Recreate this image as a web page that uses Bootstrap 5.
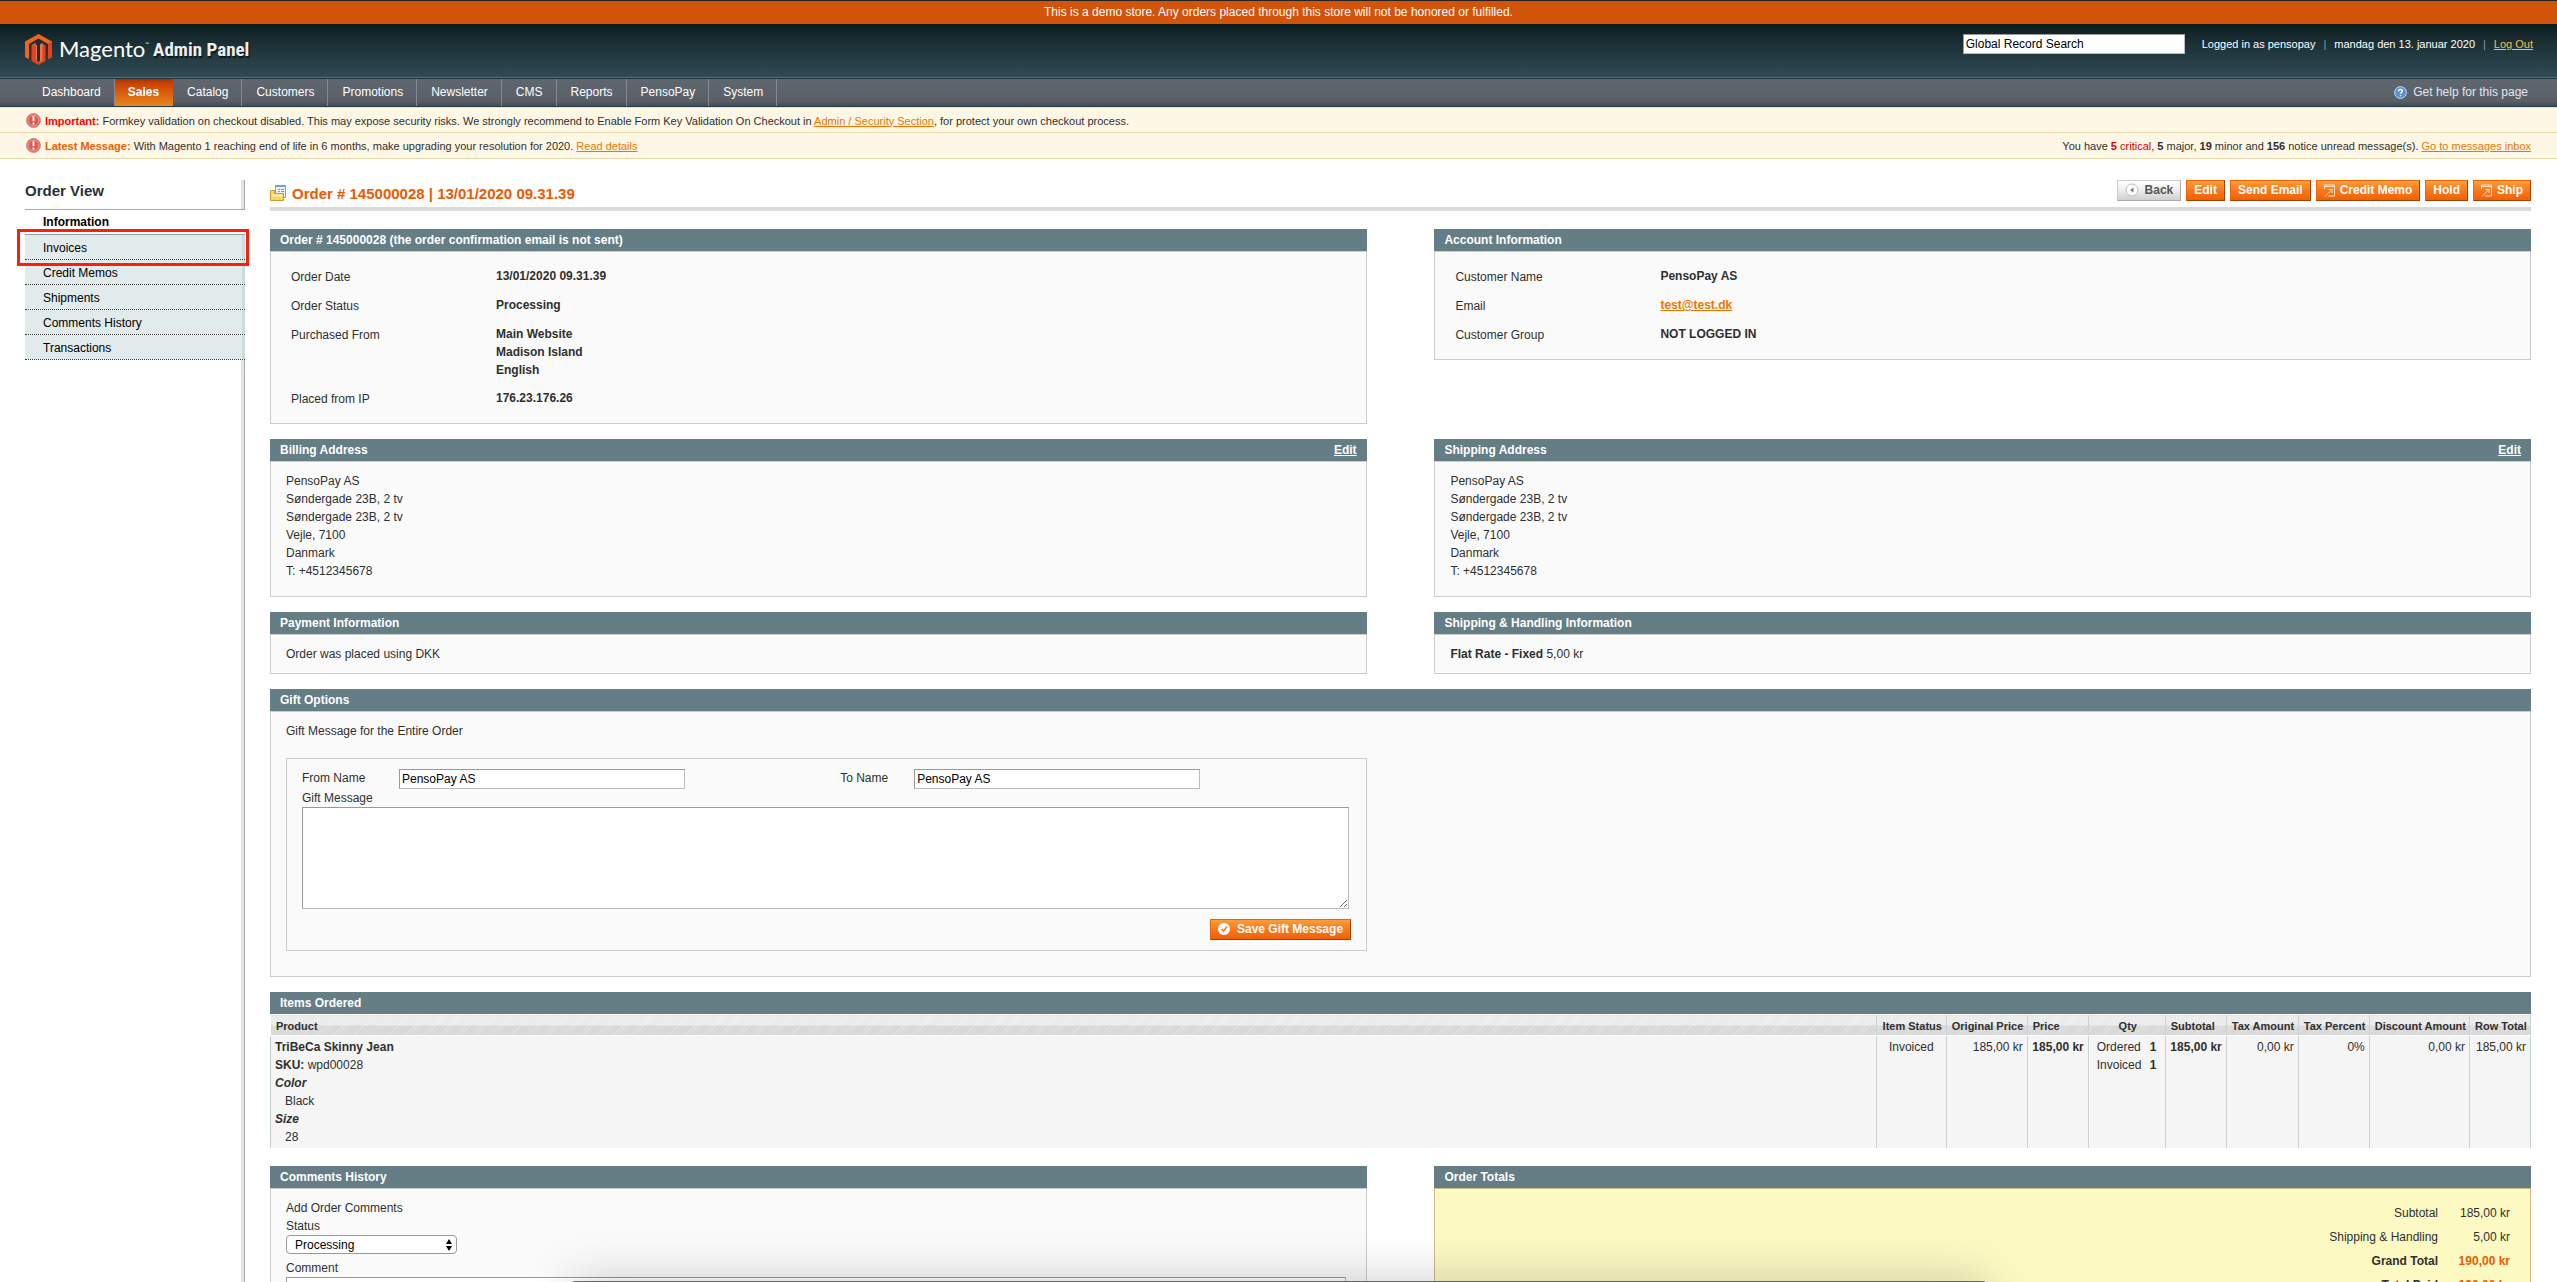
<!DOCTYPE html>
<html lang="en">
<head>
<meta charset="utf-8">
<meta name="viewport" content="width=device-width, initial-scale=1">
<title>Order # 145000028 / Magento Admin</title>
<link href="https://cdn.jsdelivr.net/npm/bootstrap@5.3.0/dist/css/bootstrap.min.css" rel="stylesheet">
<style>
body{font-family:"Liberation Sans",Arial,sans-serif;font-size:12px;line-height:18px;color:#2f2f2f;background:#fff;height:100vh;overflow:hidden}
a{color:#ea7601}
input,textarea,select,button{font:inherit}
.demo-notice{background:#d2530a;border-top:1px solid #222;color:#fff;height:24px;line-height:22px}
.top-bar{background:linear-gradient(#0d1d20,#1e343a 45%,#324b55);height:55px;border-bottom:1px solid #1e353e;box-shadow:inset 0 -1px #56707a;padding:10px 24px 0 25px;color:#fff}
.top-bar .logout{color:#f8bb52}
.session-line{font-size:11px}
.brand-name{font-family:Lato,"Open Sans",sans-serif;font-size:22px;line-height:30px;margin-left:7px}
.brand-name sup{font-size:5px;top:-11px}
.brand-sub{font-weight:700;font-size:19px;line-height:31px;color:#eee;text-shadow:1px 2px 1px #0b1518;font-family:"Liberation Sans Narrow","Roboto Condensed","Open Sans Condensed",Roboto,sans-serif}
.field-box{border:1px solid;border-color:#999 #bbb #bbb #999;background:#fff;color:#000;height:20px;padding:0 2px;border-radius:0}
.search-box{width:222px;margin-right:17px}
.header-sep{color:#8b9a9f;margin:0 8px}
.main-nav{background:linear-gradient(#5f666d,#5a6067 80%,#454c52);height:28px;border-bottom:1px solid #24404b;padding:0 26px 0 28px}
.main-nav a{display:block;color:#fff;text-decoration:none;line-height:27px;height:27px;padding:0 13px 0 14px;border-right:1px solid #84898e}
.main-nav a.current{background:linear-gradient(#a33404,#ce4303 18%,#e8851e);font-weight:700;border-right:0;padding:0 14px 0 13px}
.main-nav a.help-link{border:0;padding:0 3px;gap:6px;color:#e4e6f5}
.msg-row{background:#fff7e5;border-bottom:1px solid #eadbae;height:26px;font-size:11px;padding:0 26px}
.msg-row.first-msg{border-top:1px solid #efe5b8;padding-top:1px}
.tag-important{color:#f00}
.tag-latest{color:#eb5e00}
.tag-critical{color:#d60000}
.page-body{padding:21px 26px 0 25px;gap:25px}
.side-menu{width:220px}
.side-menu h3{font-size:15px;line-height:22px;font-weight:700;color:#263238;height:30px;border-bottom:1px solid #aaa;margin:0}
.side-strip{border-right:1px solid #a9a9a9;box-shadow:inset -3px 0 #e2e2e2}
.side-menu a{display:block;height:25px;line-height:26px;padding-left:18px;color:#000;text-decoration:none;background:#e2ebeb;background-clip:padding-box;border-bottom:1px dotted #333;box-shadow:inset -3px 0 #c9dedd}
.side-menu a.active{background:#fff;font-weight:700;line-height:24px;border-bottom:1px solid #999;box-shadow:none}
.callout-frame{left:-8px;right:-4px;top:-6px;height:37px;border:3px solid #f8200a;z-index:2;pointer-events:none}
.page-head{height:31px;border-bottom:4px solid #dadada;margin-bottom:18px}
.page-head h1{font-size:15px;line-height:28px;font-weight:700;color:#eb5a00;margin:0}
.title-line{gap:6px}
.btn-line{gap:5px}
.act-btn{height:21px;line-height:17px;padding:0 7px 1px;font-weight:700;color:#fff;border:1px solid;border-color:#ed6502 #a04300 #a04300 #ed6502;background:linear-gradient(#ff9d38,#f8791c 50%,#f26006);display:inline-flex;align-items:center;gap:5px;white-space:nowrap}
.act-btn.back{gap:6px;color:#555;border-color:#ccc #aaa #aaa #ccc;background:linear-gradient(#fff,#ececec 50%,#cfcfcf)}
.act-btn.save{gap:7px}
.half{width:48.5%}
.panel-head{background:#657d85;color:#fff;font-weight:700;height:22px;line-height:22px;padding:0 10px}
.panel-head a{color:#fff}
.panel-body{background:#fafafa;border:1px solid #ccc;padding:10px 15px}
.panel-body address{margin-bottom:6px}
.panel-gap{margin-bottom:15px}
.info-table th{font-weight:400;width:205px;padding:6px 5px 5px;vertical-align:top}
.info-table td{font-weight:700;padding:5px;vertical-align:top}
.gift-body{padding-bottom:25px}
.gift-title{margin-bottom:18px}
.gift-box{border:1px solid #ccc;padding:10px 15px}
.from-col{width:51.3%}
.from-col label{width:97px}
.to-col label{width:74px}
.name-input{width:286px}
.msg-area{width:calc(100% - 2px);height:102px;resize:vertical}
.comment-area{width:calc(100% - 5px);height:80px}
.save-line{margin-top:10px}
.items-table{border:1px solid #c6d1d1;border-top:1px solid #ccc;border-bottom:0;background:#f5f5f5}
.items-table th{font-size:11px;line-height:18px;height:20px;padding:2px 3px 0 5px;border:1px solid #fff;border-width:1px 0 1px 1px;white-space:nowrap;background:repeating-linear-gradient(135deg,rgba(255,255,255,.3) 0 1px,transparent 1px 3px),linear-gradient(#eaeaea 50%,#d6d6d6 50%)}
.items-table td{vertical-align:top;padding:2px 4px;white-space:nowrap}
.items-table th+th,.items-table td+td{border-left:1px solid #ccd3d3}
.items-table dd{margin:0 0 0 10px}
.items-table dl{margin:0}
.col-status{width:70px}.col-orig{width:81px}.col-price{width:61px}.col-qty{width:77px}.col-sub{width:61px}.col-tax{width:72px}.col-pct{width:71px}.col-disc{width:100px}.col-row{width:61px}
.qty-line{padding-left:4px}
.qty-line span{width:53px}
.last-row{margin-top:18px}
.totals-body{background:#fdf9c3;border:1px solid #ccba88;padding:12px 15px}
.totals-body td{padding:3px 5px;text-align:right}
.totals-body td+td{width:72px}
.totals-body .money{color:#eb5a00}
.status-select{width:171px;height:19px;margin-bottom:5px;border:1px solid #999;border-radius:4px;padding:0 8px;appearance:none;color:#000;background:#fff url("data:image/svg+xml,%3Csvg xmlns='http://www.w3.org/2000/svg' width='6' height='12'%3E%3Cpath d='M0 5l3-5 3 5zM0 7h6l-3 5z'/%3E%3C/svg%3E") no-repeat right 4px center}
.dock-edge{left:50%;width:1414px;margin-left:-707px;bottom:-99px;height:100px;background:#666;border-radius:3px;box-shadow:0 0 50px rgba(0,0,0,.2);z-index:5}
</style>
</head>
<body>
<div class="d-flex flex-column h-100">
<div class="demo-notice text-center flex-shrink-0">This is a demo store. Any orders placed through this store will not be honored or fulfilled.</div>
<header class="top-bar d-flex justify-content-between align-items-start flex-shrink-0">
  <div class="d-flex">
    <svg width="27" height="31" viewBox="0 0 27 31" aria-label="Magento"><path fill="#f26322" d="M13.500 0 27 7.500V23l-4 2.300V10L13.500 4.600 4 10v15.300L0 23V7.500z"/><path fill="#e8401c" d="M23 10l4-2.500V23l-4 2.300zM6.500 11.500 10.500 9v17l3 1.800 3-1.800V9l4 2.500V27l-7 4-7-4z"/><path fill="#f2704c" d="M6.500 11.500 10.500 9v17l1.500 1v-16zM15 11l1.500-2 1 .600V27l-2.500 1z"/><path fill="#1b3036" d="M12 9.500h3V26l-1.500.900L12 26z"/></svg>
    <span class="brand-name">Magento<sup>™</sup></span>
    <span class="brand-sub ms-1">Admin Panel</span>
  </div>
  <div class="d-flex align-items-center">
    <input class="field-box search-box" type="text" value="Global Record Search" aria-label="Global Record Search">
    <div class="session-line d-flex"><span>Logged in as pensopay</span><span class="header-sep">|</span><span>mandag den 13. januar 2020</span><span class="header-sep">|</span><a href="#" class="logout">Log Out</a></div>
  </div>
</header>
<nav class="main-nav d-flex flex-shrink-0">
  <a href="#">Dashboard</a><a href="#" class="current">Sales</a><a href="#">Catalog</a><a href="#">Customers</a><a href="#">Promotions</a><a href="#">Newsletter</a><a href="#">CMS</a><a href="#">Reports</a><a href="#">PensoPay</a><a href="#">System</a>
  <a href="#" class="help-link ms-auto d-flex align-items-center"><svg width="13" height="13" viewBox="0 0 13 13"><circle cx="6.500" cy="6.500" r="5.900" fill="#5b8fd0" stroke="#c5dcf5"/><path d="M4.600 5.200c0-2.500 3.900-2.300 3.700 0-.1 1.300-1.800 1.300-1.800 2.600M6.500 9v1.300" fill="none" stroke="#fff" stroke-width="1.400"/></svg>Get help for this page</a>
</nav>
<div class="msg-row first-msg d-flex align-items-center gap-1 flex-shrink-0">
  <svg width="15" height="15" viewBox="0 0 15 15"><circle cx="7.500" cy="7.500" r="6.900" fill="#df5a50" stroke="#c98a80"/><circle cx="7.500" cy="7.500" r="5.400" fill="none" stroke="#f0a8a0"/><path d="M7.500 3.300v5M7.500 9.800v1.800" stroke="#fff" stroke-width="1.900"/></svg>
  <span><strong class="tag-important">Important:</strong> Formkey validation on checkout disabled. This may expose security risks. We strongly recommend to Enable Form Key Validation On Checkout in <a href="#">Admin / Security Section</a>, for protect your own checkout process.</span>
</div>
<div class="msg-row d-flex align-items-center gap-1 flex-shrink-0">
  <svg width="15" height="15" viewBox="0 0 15 15"><circle cx="7.500" cy="7.500" r="6.900" fill="#df5a50" stroke="#c98a80"/><circle cx="7.500" cy="7.500" r="5.400" fill="none" stroke="#f0a8a0"/><path d="M7.500 3.300v5M7.500 9.800v1.800" stroke="#fff" stroke-width="1.900"/></svg>
  <span><strong class="tag-latest">Latest Message:</strong> With Magento 1 reaching end of life in 6 months, make upgrading your resolution for 2020. <a href="#">Read details</a></span>
  <span class="ms-auto">You have <span class="tag-critical"><strong>5</strong> critical</span>, <strong>5</strong> major, <strong>19</strong> minor and <strong>156</strong> notice unread message(s). <a href="#">Go to messages inbox</a></span>
</div>

<div class="page-body d-flex flex-grow-1 overflow-hidden">
  <aside class="side-menu d-flex flex-column flex-shrink-0">
    <h3 class="side-strip">Order View</h3>
    <a href="#" class="active">Information</a>
    <div class="position-relative"><a href="#">Invoices</a><div class="callout-frame position-absolute"></div></div>
    <a href="#">Credit Memos</a>
    <a href="#">Shipments</a>
    <a href="#">Comments History</a>
    <a href="#">Transactions</a>
    <div class="side-strip flex-grow-1"></div>
  </aside>

  <main class="flex-grow-1">
    <div class="page-head d-flex justify-content-between">
      <div class="title-line d-flex">
        <svg class="mt-1" width="16" height="18" viewBox="0 0 16 18"><path d="M5.500 1.500h10v12h-10z" fill="#eaf2fc" stroke="#7c9cc8"/><path d="M5.500 2.500h10" stroke="#7c9cc8"/><path d="M8 5.500h2M11 5.500h3M8 7.500h2M11 7.500h3M8 9.500h6" stroke="#6f9bd6"/><path d="M.500 16.500v-10h4v3h9v7z" fill="#f8d568" stroke="#d59a2c"/><path d="M2 11.500h10" stroke="#fdf0b8" stroke-width="2"/></svg>
        <h1>Order # 145000028 | 13/01/2020 09.31.39</h1>
      </div>
      <div class="btn-line d-flex align-items-start">
        <button class="act-btn back" type="button"><svg width="14" height="14" viewBox="0 0 14 14"><circle cx="7" cy="7" r="6" fill="#fff" stroke="#bbb"/><path d="M8.500 4.500v5L5 7z" fill="#777"/></svg>Back</button>
        <button class="act-btn" type="button">Edit</button>
        <button class="act-btn" type="button">Send Email</button>
        <button class="act-btn" type="button"><svg width="11" height="13" viewBox="0 0 11 13"><path d="M.500 5V1h10v11H4M.500 2.500h10M4.500 5.500H8v3.500M8 5.500 1 12.500" fill="none" stroke="#ffe3cc"/></svg>Credit Memo</button>
        <button class="act-btn" type="button">Hold</button>
        <button class="act-btn" type="button"><svg width="11" height="13" viewBox="0 0 11 13"><path d="M.500 5V1h10v11H4M.500 2.500h10M4.500 5.500H8v3.500M8 5.500 1 12.500" fill="none" stroke="#ffe3cc"/></svg>Ship</button>
      </div>
    </div>

    <div class="d-flex justify-content-between align-items-start panel-gap">
      <section class="half">
        <div class="panel-head">Order # 145000028 (the order confirmation email is not sent)</div>
        <div class="panel-body"><table class="info-table">
          <tr><th>Order Date</th><td>13/01/2020 09.31.39</td></tr>
          <tr><th>Order Status</th><td>Processing</td></tr>
          <tr><th>Purchased From</th><td>Main Website<br>Madison Island<br>English</td></tr>
          <tr><th>Placed from IP</th><td>176.23.176.26</td></tr>
        </table></div>
      </section>
      <section class="half">
        <div class="panel-head">Account Information</div>
        <div class="panel-body"><table class="info-table">
          <tr><th>Customer Name</th><td>PensoPay AS</td></tr>
          <tr><th>Email</th><td><a href="#">test@test.dk</a></td></tr>
          <tr><th>Customer Group</th><td>NOT LOGGED IN</td></tr>
        </table></div>
      </section>
    </div>

    <div class="d-flex justify-content-between panel-gap">
      <section class="half">
        <div class="panel-head d-flex justify-content-between">Billing Address<a href="#">Edit</a></div>
        <div class="panel-body"><address>PensoPay AS<br>Søndergade 23B, 2 tv<br>Søndergade 23B, 2 tv<br>Vejle, 7100<br>Danmark<br>T: +4512345678</address></div>
      </section>
      <section class="half">
        <div class="panel-head d-flex justify-content-between">Shipping Address<a href="#">Edit</a></div>
        <div class="panel-body"><address>PensoPay AS<br>Søndergade 23B, 2 tv<br>Søndergade 23B, 2 tv<br>Vejle, 7100<br>Danmark<br>T: +4512345678</address></div>
      </section>
    </div>

    <div class="d-flex justify-content-between panel-gap">
      <section class="half">
        <div class="panel-head">Payment Information</div>
        <div class="panel-body">Order was placed using DKK</div>
      </section>
      <section class="half">
        <div class="panel-head">Shipping &amp; Handling Information</div>
        <div class="panel-body"><strong>Flat Rate - Fixed</strong> 5,00 kr</div>
      </section>
    </div>

    <section class="panel-gap">
      <div class="panel-head">Gift Options</div>
      <div class="panel-body gift-body">
        <div class="gift-title">Gift Message for the Entire Order</div>
        <div class="gift-box half">
          <div class="d-flex">
            <div class="from-col d-flex"><label for="from">From Name</label><input id="from" class="field-box name-input" type="text" value="PensoPay AS"></div>
            <div class="to-col d-flex"><label for="to">To Name</label><input id="to" class="field-box name-input" type="text" value="PensoPay AS"></div>
          </div>
          <label class="d-block" for="gift">Gift Message</label>
          <textarea id="gift" class="field-box msg-area d-block"></textarea>
          <div class="save-line d-flex justify-content-end"><button class="act-btn save" type="button"><svg width="12" height="12" viewBox="0 0 12 12"><circle cx="6" cy="6" r="6" fill="#fff"/><path d="M3.500 6l2 2.200L9 3.500" fill="none" stroke="#f47a20" stroke-width="1.600"/></svg>Save Gift Message</button></div>
        </div>
      </div>
    </section>

    <section>
      <div class="panel-head">Items Ordered</div>
      <table class="items-table w-100">
        <thead><tr><th>Product</th><th class="col-status text-center">Item Status</th><th class="col-orig">Original Price</th><th class="col-price">Price</th><th class="col-qty text-center">Qty</th><th class="col-sub">Subtotal</th><th class="col-tax">Tax Amount</th><th class="col-pct">Tax Percent</th><th class="col-disc">Discount Amount</th><th class="col-row">Row Total</th></tr></thead>
        <tbody><tr>
          <td><strong>TriBeCa Skinny Jean</strong><br><strong>SKU:</strong> wpd00028
            <dl><dt><em>Color</em></dt><dd>Black</dd><dt><em>Size</em></dt><dd>28</dd></dl></td>
          <td class="text-center">Invoiced</td><td class="text-end">185,00 kr</td><td class="text-end"><strong>185,00 kr</strong></td>
          <td><div class="qty-line d-flex"><span>Ordered</span><strong>1</strong></div><div class="qty-line d-flex"><span>Invoiced</span><strong>1</strong></div></td>
          <td class="text-end"><strong>185,00 kr</strong></td><td class="text-end">0,00 kr</td><td class="text-end">0%</td><td class="text-end">0,00 kr</td><td class="text-end">185,00 kr</td>
        </tr></tbody>
      </table>
    </section>

    <div class="last-row d-flex justify-content-between align-items-start">
      <section class="half">
        <div class="panel-head">Comments History</div>
        <div class="panel-body">
          <div>Add Order Comments</div>
          <label class="d-block" for="status">Status</label>
          <select id="status" class="status-select d-block"><option>Processing</option></select>
          <label class="d-block" for="comment">Comment</label>
          <textarea id="comment" class="field-box comment-area d-block"></textarea>
        </div>
      </section>
      <section class="half">
        <div class="panel-head">Order Totals</div>
        <div class="totals-body"><table class="w-100">
          <tr><td>Subtotal</td><td>185,00 kr</td></tr>
          <tr><td>Shipping &amp; Handling</td><td>5,00 kr</td></tr>
          <tr><td><strong>Grand Total</strong></td><td><strong class="money">190,00 kr</strong></td></tr>
          <tr><td><strong>Total Paid</strong></td><td><strong class="money">190,00 kr</strong></td></tr>
        </table></div>
      </section>
    </div>
  </main>
</div>
</div>
<div class="dock-edge position-fixed"></div>
<script src="https://cdn.jsdelivr.net/npm/bootstrap@5.3.0/dist/js/bootstrap.bundle.min.js"></script>
</body>
</html>
